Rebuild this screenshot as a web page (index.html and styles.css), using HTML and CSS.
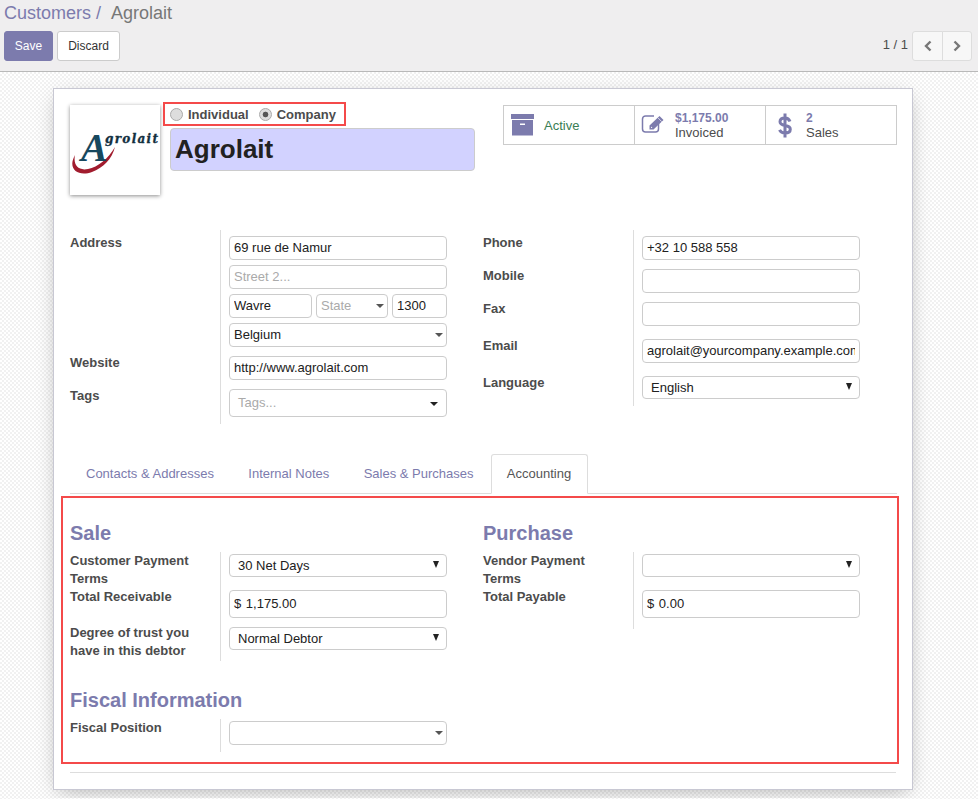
FILE: index.html
```html
<!DOCTYPE html>
<html lang="en">
<head>
  <meta charset="UTF-8" />
  <meta name="viewport" content="width=device-width, initial-scale=1" />
  <title>Agrolait - Customers</title>
  <link rel="stylesheet" href="styles.css">
</head>
<body>
  <!-- Top bar: breadcrumb, save/discard, pager -->
  <div class="control-panel">
    <div class="breadcrumb"><a class="crumb-link">Customers</a><span class="crumb-sep">/</span><span class="crumb-current">Agrolait</span></div>
    <div class="panel-row">
      <div class="panel-buttons">
        <button class="btn btn-primary">Save</button>
        <button class="btn btn-default">Discard</button>
      </div>
      <div class="pager">
        <span class="pager-value">1 / 1</span>
        <div class="pager-buttons">
          <button class="pager-btn"><svg width="10" height="12" viewBox="0 0 10 12"><path d="M7.5 1.5 3 6l4.5 4.5" fill="none" stroke="#777" stroke-width="2.4"/></svg></button>
          <button class="pager-btn"><svg width="10" height="12" viewBox="0 0 10 12"><path d="M2.5 1.5 7 6l-4.5 4.5" fill="none" stroke="#777" stroke-width="2.4"/></svg></button>
        </div>
      </div>
    </div>
  </div>

  <div class="sheet">
    <div class="sheet-header">
      <div class="avatar">
        <svg width="90" height="90" viewBox="0 0 90 90">
          <path d="M5 50C-3 64 8 72 22 67 33 63 42 54 45 42 38 54 28 62 18 64 8 66 3 60 5 50Z" fill="#a11c2e"/>
          <text x="11" y="56" class="logo-a">A</text>
          <text x="35" y="38" class="logo-word" textLength="53">grolait</text>
        </svg>
      </div>
      <div class="title-col">
        <div class="company-type">
          <span class="radio"></span><span class="radio-label">Individual</span>
          <span class="radio radio-on"></span><span class="radio-label">Company</span>
        </div>
        <div class="type-highlight"></div>
        <div class="name-field">Agrolait</div>
      </div>
      <div class="stat-buttons">
        <div class="stat">
          <svg class="stat-icon stat-box" width="24" height="22" viewBox="0 0 24 22">
            <path d="M0 0h23v5H0zM1 6h21v15.500H1z" fill="#7c7bad"/>
            <path d="M9 9.500h5v1.500H9z" fill="#fff"/>
          </svg>
          <span class="stat-active">Active</span>
        </div>
        <div class="stat">
          <svg class="stat-icon stat-edit" width="25" height="20" viewBox="0 0 25 20">
            <path d="M13 2H4.500A3 3 0 0 0 1.500 5v10a3 3 0 0 0 3 3h10a3 3 0 0 0 3-3v-5" fill="none" stroke="#7c7bad" stroke-width="1.500"/>
            <path d="M8.500 15.500v-4L18.500 2l4 4-10 9.500zM10 14h1.500l-1.500-1.500z" fill="#7c7bad" fill-rule="evenodd"/>
            <path d="M16.800 3.700l4 4" stroke="#fff" stroke-width=".7"/>
          </svg>
          <div class="stat-text"><span class="stat-value">$1,175.00</span><span class="stat-name">Invoiced</span></div>
        </div>
        <div class="stat">
          <svg class="stat-icon stat-dollar" width="14" height="25" viewBox="0 0 14 25">
            <path d="M12 8.500C11 6 9 5 7 5 4 5 2 6.500 2 8.800 2 14.500 12.300 10.500 12.300 16.300 12.300 18.700 10 20 7 20 4.500 20 2.500 18.800 1.500 16.800M7 .5v24" fill="none" stroke="#7c7bad" stroke-width="3"/>
          </svg>
          <div class="stat-text"><span class="stat-value">2</span><span class="stat-name">Sales</span></div>
        </div>
      </div>
    </div>

    <div class="columns info-columns">
      <div class="group">
        <div class="row row-first">
          <div class="label">Address</div>
          <div class="field address">
            <input class="input" value="69 rue de Namur">
            <input class="input" placeholder="Street 2...">
            <div class="city-line">
              <input class="input city" value="Wavre">
              <div class="select state is-empty">State<i class="caret"></i></div>
              <input class="input zip" value="1300">
            </div>
            <div class="select">Belgium<i class="caret"></i></div>
          </div>
        </div>
        <div class="row">
          <div class="label">Website</div>
          <div class="field"><input class="input" value="http://www.agrolait.com"></div>
        </div>
        <div class="row row-last">
          <div class="label">Tags</div>
          <div class="field"><div class="select tags is-empty">Tags...<i class="caret caret-dark"></i></div></div>
        </div>
      </div>
      <div class="group">
        <div class="row row-first">
          <div class="label">Phone</div>
          <div class="field"><input class="input" value="+32 10 588 558"></div>
        </div>
        <div class="row">
          <div class="label">Mobile</div>
          <div class="field"><input class="input"></div>
        </div>
        <div class="row">
          <div class="label">Fax</div>
          <div class="field"><input class="input"></div>
        </div>
        <div class="row row-wide">
          <div class="label">Email</div>
          <div class="field"><input class="input" value="agrolait@yourcompany.example.com"></div>
        </div>
        <div class="row row-wide row-lang">
          <div class="label">Language</div>
          <div class="field"><div class="select native">English<i class="arrow"></i></div></div>
        </div>
      </div>
    </div>

    <ul class="tabs">
      <li class="tab">Contacts &amp; Addresses</li>
      <li class="tab">Internal Notes</li>
      <li class="tab">Sales &amp; Purchases</li>
      <li class="tab tab-active">Accounting</li>
    </ul>

    <div class="pane">
      <!-- Red marker drawn over the tab content -->
      <div class="marker marker-pane"></div>

      <div class="columns">
        <div class="group-wrap">
          <h2 class="section-title">Sale</h2>
          <div class="group group-table">
            <div class="row">
              <div class="label">Customer Payment Terms</div>
              <div class="field"><div class="select native">30 Net Days<i class="arrow"></i></div></div>
            </div>
            <div class="row row-receivable">
              <div class="label">Total Receivable</div>
              <div class="field"><div class="input monetary">$ 1,175.00</div></div>
            </div>
            <div class="row row-trust">
              <div class="label">Degree of trust you have in this debtor</div>
              <div class="field"><div class="select native">Normal Debtor<i class="arrow"></i></div></div>
            </div>
          </div>
        </div>
        <div class="group-wrap">
          <h2 class="section-title">Purchase</h2>
          <div class="group group-table">
            <div class="row">
              <div class="label">Vendor Payment Terms</div>
              <div class="field"><div class="select native"><i class="arrow"></i></div></div>
            </div>
            <div class="row row-payable">
              <div class="label">Total Payable</div>
              <div class="field"><div class="input monetary">$ 0.00</div></div>
            </div>
          </div>
        </div>
      </div>

      <h2 class="section-title fiscal-title">Fiscal Information</h2>
      <div class="group group-table fiscal-group">
        <div class="row">
          <div class="label">Fiscal Position</div>
          <div class="field"><div class="select"><i class="caret"></i></div></div>
        </div>
      </div>
    </div>

    <hr class="sheet-rule">
  </div>
</body>
</html>
```

FILE: styles.css
```css
/* ---------- page ---------- */
body {
  margin: 0;
  font-family: "Liberation Sans", Arial, sans-serif;
  font-size: 13px;
  line-height: 18px;
  color: #4c4c4c;
  background-color: #fff;
  background-image: conic-gradient(#f1f1f1 25%, #fff 0 50%, #f1f1f1 0 75%, #fff 0);
  background-size: 4px 4px;
}

/* ---------- control panel ---------- */
.control-panel {
  height: 71px;
  padding: 0 6px 0 4px;
  background: #efeeef;
  border-bottom: 1px solid #b9b9b9;
}
.breadcrumb {
  height: 31px;
  font-size: 18px;
  line-height: 27px;
}
.crumb-link { color: #7c7bad; }
.crumb-sep { color: #7c7bad; margin: 0 10px 0 5px; }
.crumb-current { color: #777; }
.panel-row {
  display: flex;
  justify-content: space-between;
}
.panel-buttons {
  display: flex;
  gap: 4px;
}
.btn {
  height: 30px;
  border-radius: 3px;
  font: inherit;
  font-size: 12px;
  padding: 0;
}
.btn-primary {
  width: 49px;
  background: #7c7bad;
  border: 1px solid #7c7bad;
  color: #fff;
}
.btn-default {
  width: 63px;
  background: #fff;
  border: 1px solid #ccc;
  color: #333;
}
.pager {
  display: flex;
  align-items: center;
  gap: 4px;
}
.pager-value { margin-top: -2px; }
.pager-buttons { display: flex; }
.pager-btn {
  display: flex;
  align-items: center;
  justify-content: center;
  width: 31px;
  height: 30px;
  padding: 0;
  background: #f7f7f7;
  border: 1px solid #ddd;
  border-radius: 3px 0 0 3px;
}
.pager-btn + .pager-btn {
  width: 30px;
  margin-left: -1px;
  border-radius: 0 3px 3px 0;
}

/* ---------- sheet ---------- */
.sheet {
  width: 827px;
  margin: 16px 0 8px 53px;
  padding: 16px 15px 16px 16px;
  background: #fff;
  border: 1px solid #c8c8d3;
  box-shadow: 0 5px 20px -6px rgba(0, 0, 0, 0.35);
}
.sheet-header {
  display: flex;
  height: 125px;
}
.avatar {
  width: 90px;
  height: 90px;
  background: #fff;
  box-shadow: 0 1px 4px rgba(0, 0, 0, 0.45);
}
.logo-a {
  font: italic bold 40px "Liberation Serif", serif;
  fill: #17485e;
}
.logo-word {
  font: italic bold 12px "DejaVu Serif", serif;
  fill: #13303f;
  stroke: #13303f;
  stroke-width: 0.3px;
}
.title-col {
  position: relative;
  width: 305px;
  margin-left: 10px;
}
.company-type {
  display: flex;
  align-items: center;
  height: 23px;
  margin-top: -2px;
  padding-bottom: 2px;
}
.type-highlight {
  position: absolute;
  left: -7px;
  top: -3px;
  width: 179px;
  height: 20px;
  border: 2px solid #f44a4a;
}
.radio {
  width: 11px;
  height: 11px;
  margin-right: 5px;
  border: 1px solid #aaa;
  border-radius: 50%;
  background: #ddd;
}
.radio-on {
  background: radial-gradient(circle, #555 0 2.5px, #ddd 3.2px);
}
.radio-label {
  margin-right: 10px;
  font-weight: bold;
}
.name-field {
  box-sizing: border-box;
  height: 43px;
  padding-left: 4px;
  font-size: 26px;
  font-weight: bold;
  line-height: 41px;
  color: #212121;
  background: #d2d2ff;
  border: 1px solid #ccc;
  border-radius: 4px;
}
.stat-buttons {
  display: flex;
  box-sizing: border-box;
  width: 394px;
  height: 40px;
  margin-left: auto;
  border: 1px solid #ccc;
}
.stat {
  display: flex;
  align-items: center;
  flex: 1;
  padding-left: 6px;
}
.stat + .stat { border-left: 1px solid #ccc; }
.stat-icon { flex: none; margin-right: 9px; }
.stat-box { margin-left: 1px; }
.stat-edit { margin-bottom: 2px; }
.stat-dollar { margin: 0 14px 0 6px; }
.stat-active { margin-top: 2px; color: #3a7d54; font-size: 13px; }
.stat-text {
  display: flex;
  flex-direction: column;
  padding-top: 1px;
  font-size: 13px;
  line-height: 15px;
}
.stat-value {
  font-size: 12px;
  line-height: 13px;
  font-weight: bold;
  color: #7c7bad;
}

/* ---------- form groups ---------- */
.columns {
  display: flex;
  gap: 36px;
}
.info-columns {
  height: 224px;
}
.group { width: 377px; align-self: flex-start; }
.row {
  display: grid;
  grid-template-columns: 150px 1fr;
}
.label {
  font-weight: bold;
  color: #4c4c4c;
}
.field {
  display: flex;
  flex-direction: column;
  padding: 3px 0 6px 8px;
  border-left: 1px solid #ddd;
}
.info-columns .label { padding-top: 1px; }
.info-columns .row-first .label { padding-top: 4px; }
.row-first .field { padding-top: 6px; }
.row-last .field { padding-bottom: 7px; }
.info-columns .row-wide .label { padding-top: 5px; }
.row-wide .field { padding-top: 7px; }
.row-lang .field { padding-bottom: 7px; }

.address { gap: 5px; }
.city-line { display: flex; gap: 4px; }

.input, .select {
  box-sizing: border-box;
  display: block;
  width: 100%;
  height: 24px;
  padding: 0 4px;
  font: inherit;
  line-height: 22px;
  color: #212121;
  background: #fff;
  border: 1px solid #ccc;
  border-radius: 4px;
}
input.input { padding-bottom: 2px; }
.input::placeholder { color: #aaa; }
.city { width: 83px; flex: none; }
.zip { width: 55px; flex: none; }
.state { width: 72px; flex: none; }

.select { position: relative; }
.is-empty { color: #aaa; }
.tags { height: 28px; padding-left: 8px; line-height: 26px; }
.native { height: 23px; padding-left: 8px; line-height: 21px; }
.monetary { height: 28px; line-height: 26px; word-spacing: 1px; }

/* dropdown markers sit over the right end of the control */
.caret {
  position: absolute;
  right: 3px;
  top: 9px;
  border-top: 4px solid #555;
  border-left: 4px solid transparent;
  border-right: 4px solid transparent;
}
.caret-dark {
  right: 8px;
  top: 12px;
  border-top-color: #222;
}
.arrow {
  position: absolute;
  right: 7px;
  top: 6px;
  border-top: 7px solid #222;
  border-left: 3px solid transparent;
  border-right: 3px solid transparent;
}

/* ---------- tabs ---------- */
.tabs {
  display: flex;
  gap: 2.4px;
  height: 39px;
  margin: 0;
  padding: 0;
  list-style: none;
  border-bottom: 1px solid #ddd;
}
.tab {
  height: 39px;
  padding: 0 16px;
  line-height: 40px;
  color: #7c7bad;
}
.tab-active {
  box-sizing: border-box;
  height: 40px;
  margin-left: -1px;
  color: #555;
  background: #fff;
  border: 1px solid #ddd;
  border-bottom-color: #fff;
  border-radius: 3px 3px 0 0;
  padding: 0 16px 0 15px;
  line-height: 38px;
}

/* ---------- accounting pane ---------- */
.pane {
  position: relative;
  padding-top: 28px;
}
.marker-pane {
  position: absolute;
  left: -9px;
  right: -2px;
  top: 2px;
  height: 264px;
  border: 2px solid #f44a4a;
}
.section-title {
  margin: 0 0 8px;
  font-size: 20px;
  line-height: 22px;
  font-weight: bold;
  color: #7c7bad;
}
.fiscal-title { margin-top: 28px; }
.group-table .label { padding-right: 8px; }
.group-table .field { padding: 2px 0 0 8px; }
.group-table .row-receivable .field { padding-bottom: 6px; }
.group-table .row-payable .field { padding-bottom: 11px; }
.group-table .row-trust .field { padding-top: 3px; }
.row-trust .label { padding-bottom: 1px; }
.group-table.fiscal-group .field { padding: 2px 0 7px 8px; }

.sheet-rule {
  height: 1px;
  margin: 20px 1px 0 0;
  border: 0;
  background: #ddd;
}
```
